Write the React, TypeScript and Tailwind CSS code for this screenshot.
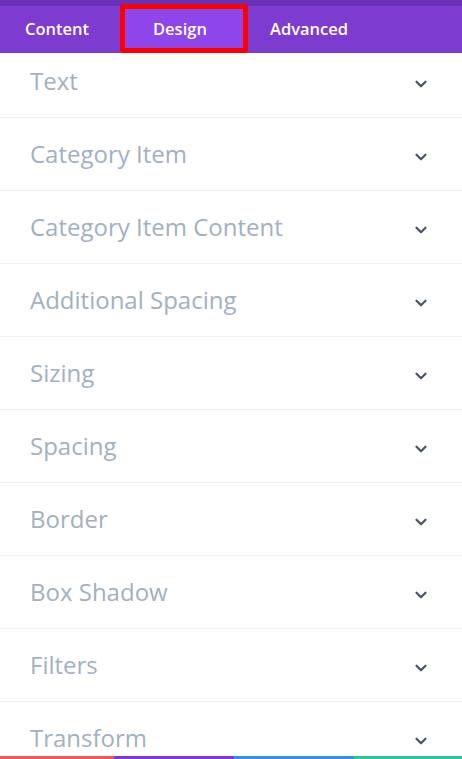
import { ChevronDown } from 'lucide-react';

const sections = [
  'Text',
  'Category Item',
  'Category Item Content',
  'Additional Spacing',
  'Sizing',
  'Spacing',
  'Border',
  'Box Shadow',
  'Filters',
  'Transform',
];

export default function App() {
  return (
    <div className="h-[759px] w-full flex flex-col bg-white overflow-hidden" style={{ fontFamily: '"Open Sans", sans-serif' }}>
      <div className="h-[53px] shrink-0 bg-[#7d3bcf] border-t-[6px] border-[#6a30b6] flex items-stretch text-white text-[16.5px] font-semibold relative">
        <div className="w-[120px] pl-[25px] flex items-center">Content</div>
        <div className="w-[128px] pl-[33px] flex items-center bg-[#8e45ea]">Design</div>
        <div className="pl-[22px] flex items-center">Advanced</div>
        <div className="absolute left-[120px] top-[-2px] w-[128px] h-[49px] border-[5px] border-[#ff0000] rounded-[3px]" />
      </div>

      <div className="flex-1 overflow-hidden">
        <div className="-mt-[8px]">
          {sections.map((s) => (
            <div key={s} className="h-[73px] border-b border-[#eef0f2] flex items-center justify-between pl-[30px] pr-[32px]">
              <span className="text-[24px] text-[#a3b0c1]">{s}</span>
              <ChevronDown className="w-[18px] h-[18px] text-[#4a5566] translate-y-[3px]" strokeWidth={3} />
            </div>
          ))}
        </div>
      </div>

      <div className="h-[3px] shrink-0 flex">
        <div className="w-[114px] bg-[#ec5a58]" />
        <div className="w-[120px] bg-[#7f3bd0]" />
        <div className="w-[120px] bg-[#3a8ee0]" />
        <div className="flex-1 bg-[#2ec4a2]" />
      </div>
    </div>
  );
}
